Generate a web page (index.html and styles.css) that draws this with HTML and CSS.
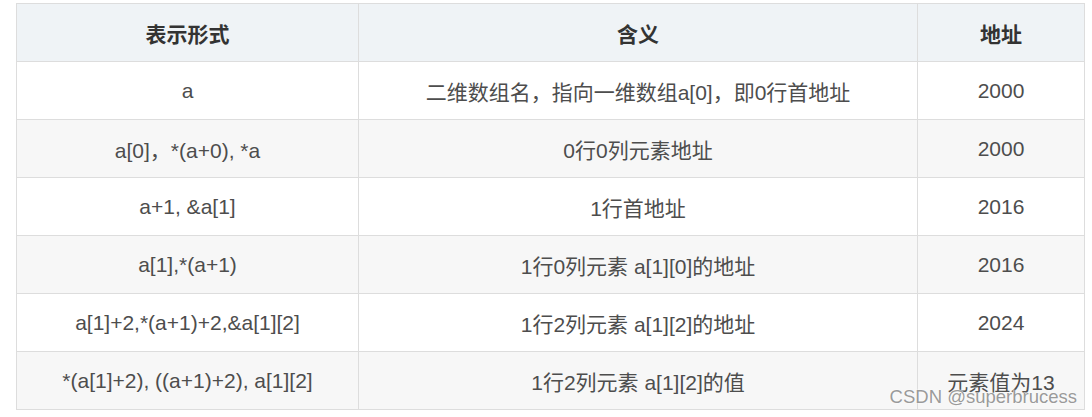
FILE: index.html
```html
<!DOCTYPE html>
<html lang="zh">
<head>
<meta charset="utf-8">
<link rel="stylesheet" href="styles.css">
</head>
<body>
<div class="wrap">
<table class="grid">
  <colgroup><col class="c1"><col class="c2"><col class="c3"></colgroup>
  <thead>
    <tr><th>表示形式</th><th>含义</th><th>地址</th></tr>
  </thead>
  <tbody>
    <tr><td>a</td><td>二维数组名，指向一维数组a[0]，即0行首地址</td><td>2000</td></tr>
    <tr><td>a[0]，*(a+0), *a</td><td>0行0列元素地址</td><td>2000</td></tr>
    <tr><td>a+1, &amp;a[1]</td><td>1行首地址</td><td>2016</td></tr>
    <tr><td>a[1],*(a+1)</td><td>1行0列元素 a[1][0]的地址</td><td>2016</td></tr>
    <tr><td>a[1]+2,*(a+1)+2,&amp;a[1][2]</td><td>1行2列元素 a[1][2]的地址</td><td>2024</td></tr>
    <tr><td>*(a[1]+2), ((a+1)+2), a[1][2]</td><td>1行2列元素 a[1][2]的值</td><td>元素值为13</td></tr>
  </tbody>
</table>
<div class="mark">CSDN @superbrucess</div>
</div>
</body>
</html>
```
FILE: styles.css
```css
html, body {
  margin: 0;
  background: #ffffff;
}
body {
  padding: 3px 0 0 16px;
  font-family: "Liberation Sans", "Noto Sans CJK SC", Arial, sans-serif;
  font-size: 21px;
  color: #4d4d4d;
}
.wrap {
  position: relative;
  width: 1068px;
}
.grid {
  border-collapse: collapse;
  table-layout: fixed;
  width: 1068px;
}
.c1 { width: 342px; }
.c2 { width: 559px; }
.c3 { width: 167px; }
.grid th, .grid td {
  border: 1px solid #dddddd;
  height: 57px;
  padding: 0 4px;
  text-align: center;
  vertical-align: middle;
  white-space: nowrap;
}
.grid th {
  background: #eff3f6;
  color: #333333;
  font-weight: bold;
}
.grid tbody tr:nth-child(even) td {
  background: #f7f7f7;
}
.mark {
  position: absolute;
  right: 7px;
  bottom: 2px;
  font-size: 18.5px;
  color: #9a9a9a;
  text-shadow: 0 0 2px #ffffff, 0 0 1px #ffffff;
  white-space: nowrap;
}
```
